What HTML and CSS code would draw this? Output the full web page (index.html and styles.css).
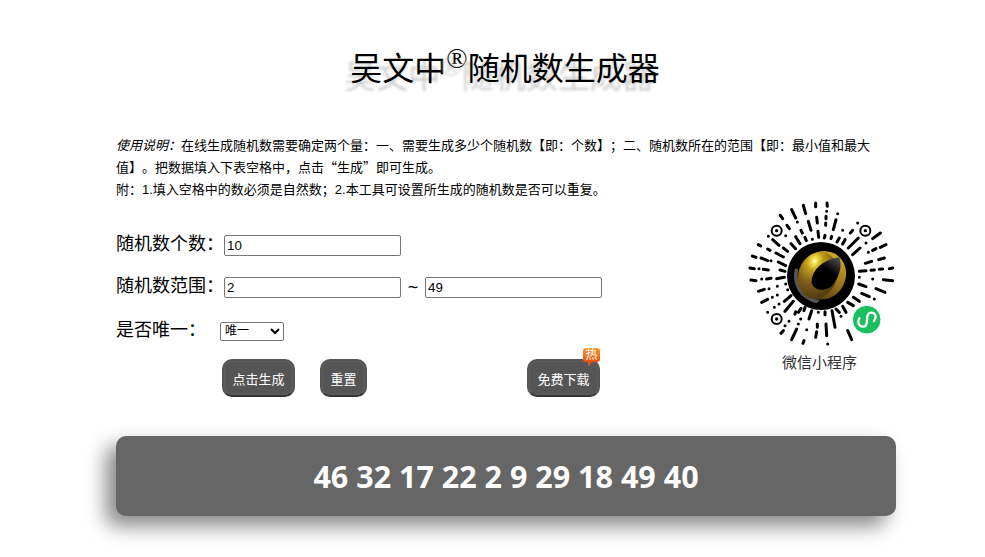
FILE: index.html
```html
<!DOCTYPE html>
<html lang="zh-CN">
<head>
<meta charset="utf-8">
<title>吴文中随机数生成器</title>
<link rel="stylesheet" href="styles.css">
</head>
<body>
<main class="page">
  <h1 class="title">吴文中<sup class="reg">®</sup>随机数生成器</h1>
  <div class="intro">
    <p><em>使用说明&#xFF1A;</em>在线生成随机数需要确定两个量&#xFF1A;一、需要生成多少个随机数【即&#xFF1A;个数】&#xFF1B;二、随机数所在的范围【即&#xFF1A;最小值和最大值】。把数据填入下表空格中&#xFF0C;点击<span class="quote">&#x201C;</span>生成<span class="quote">&#x201D;</span>即可生成。</p>
    <p>附&#xFF1A;1.填入空格中的数必须是自然数&#xFF1B;2.本工具可设置所生成的随机数是否可以重复。</p>
  </div>
  <div class="workspace">
    <form class="form">
      <div class="row">
        <label class="label">随机数个数&#xFF1A;</label>
        <input class="field" type="text" value="10">
      </div>
      <div class="row row-range">
        <label class="label">随机数范围&#xFF1A;</label>
        <input class="field" type="text" value="2">
        <span class="tilde">~</span>
        <input class="field" type="text" value="49">
      </div>
      <div class="row row-select">
        <label class="label label-select">是否唯一&#xFF1A;</label>
        <select class="select"><option>唯一</option><option>不唯一</option></select>
      </div>
      <div class="actions">
        <button class="btn" type="button">点击生成</button>
        <button class="btn" type="button">重置</button>
        <span class="spring"></span>
        <span class="btn-wrap">
          <button class="btn" type="button">免费下载</button>
          <span class="hot">热</span>
        </span>
      </div>
    </form>
    <aside class="qr">
      <svg class="qr-code" viewBox="0 0 456 456" aria-hidden="true">
        <defs>
          <radialGradient id="gold" cx="0.3" cy="0.24" r="0.95">
            <stop offset="0" stop-color="#fffbe0"/>
            <stop offset="0.07" stop-color="#f4e04a"/>
            <stop offset="0.22" stop-color="#bf9c1a"/>
            <stop offset="0.5" stop-color="#7d5c16"/>
            <stop offset="1" stop-color="#3f2e0e"/>
          </radialGradient>
          <linearGradient id="goldside" x1="0" y1="0" x2="0" y2="1">
            <stop offset="0" stop-color="#cfa926"/>
            <stop offset="0.55" stop-color="#94701a"/>
            <stop offset="1" stop-color="#4e3a12"/>
          </linearGradient>
          <linearGradient id="holefill" x1="0.8" y1="0" x2="0.2" y2="1">
            <stop offset="0" stop-color="#4a4a4a"/>
            <stop offset="0.25" stop-color="#1c1c1c"/>
            <stop offset="0.4" stop-color="#000"/>
          </linearGradient>
        </defs>
        <g class="dash">
          <path d="M212 15V26M175 22L182 47M140 35L152 60M106 52L113 62M126 82L133 92M157 72h.1M190 70L198 97M215 58L217 75M168 97L172 105M219 100L221 118M180 118L184 128M152 116L165 137M122 113h.1M202 124h.1M83 125L102 142M70 115h.1M138 137L152 152M115 150L128 160M40 140L47 144M68 153L75 157M93 165L115 177M22 174L33 178M48 180L68 188M78 188h.1M100 192L122 203M15 210L28 212M42 212h.1M55 214L70 216M105 216L120 220"/>
          <g class="q-tr">
            <path d="M18 15L19 25M17 40h.1M15 55V62M14 75V82M50 47h.1M45 65L37 95M65 97h.1M95 97L88 105M110 75h.1M12 112L10 120M32 115L30 122M55 120L48 132M72 125L65 138M112 120L82 150M117 150L95 170M135 135h.1M178 105L155 122M195 140L178 148M165 152L155 157M142 163h.1M190 180L173 185M152 190L133 196M215 210L205 212M185 213L175 214M160 216L150 217M135 218L115 220"/>
          </g>
          <g class="q-bl">
            <path d="M18 18L33 20M50 15h.1M65 15L78 13M95 14L118 10M40 52L58 46M72 44h.1M97 37h.1M122 30h.1M128 47h.1M50 85L68 76M82 70h.1M97 63h.1M118 82L138 65M68 115h.1M88 100h.1M102 90h.1M120 112L145 82M150 120L152 113M168 103L160 115M180 100L177 110M200 110L192 135M167 135h.1M220 115h.1M132 142h.1M120 155h.1M160 150h.1M108 178L115 170M155 165L140 197M185 167h.1M217 150V160M215 173L212 190M177 200L174 208"/>
          </g>
          <g class="q-br">
            <path d="M115 10h.1M155 15h.1M187 17L215 20M113 30L135 38M165 44L192 55M122 58L145 68M97 70L115 82M160 75h.1M80 85L97 95M65 97L75 115M45 105L55 115M12 113V122M33 110L42 160M60 127h.1M15 150L17 185M80 170L92 197M20 210h.1"/>
          </g>
        </g>
        <g class="rings">
          <circle cx="95" cy="98" r="15"/>
          <circle cx="361" cy="98" r="15"/>
          <circle cx="95" cy="363" r="15"/>
        </g>
        <g class="ring-dots">
          <circle cx="95" cy="98" r="5"/>
          <circle cx="361" cy="98" r="5"/>
          <circle cx="95" cy="363" r="5"/>
        </g>
        <circle class="logo-bg" cx="228" cy="234" r="102"/>
        <path class="logo-edge" d="M150 210A84 84 0 0 0 215 316L225 306A74 74 0 0 1 160 215Z"/>
        <ellipse cx="234" cy="232" rx="68" ry="74" transform="rotate(28 234 232)" fill="url(#goldside)"/>
        <ellipse cx="218" cy="232" rx="58" ry="72" transform="rotate(20 218 232)" fill="url(#gold)"/>
        <path class="logo-hole" fill="url(#holefill)" d="M282 178C240 184 200 212 200 254C206 280 250 284 267 256C284 232 293 202 282 178Z"/>
        <circle class="green" cx="365" cy="365" r="43"/>
        <path class="mini" d="M343 361C336 372 341 386 354 386C366 386 366 374 366 365C366 355 368 344 379 344C392 344 396 358 387 369"/>
      </svg>
      <div class="qr-name">微信小程序</div>
    </aside>
  </div>
  <div class="result">46 32 17 22 2 9 29 18 49 40</div>
</main>
</body>
</html>
```
FILE: styles.css
```css
* { box-sizing: border-box; }
html, body { margin: 0; background: #fff; }
body {
  font-family: "Liberation Sans", "Noto Sans CJK SC", sans-serif;
  color: #000;
  height: 557px;
  overflow: hidden;
  text-spacing-trim: space-all;
}
.page {
  width: 780px;
  margin-left: 116px;
  padding-top: 42px;
}
.title {
  margin: 0 2px 0 0;
  height: 54px;
  text-align: center;
  font-family: "Liberation Serif", "Noto Sans CJK SC", serif;
  font-size: 32px;
  font-weight: 400;
  line-height: 54px;
  text-shadow: -6px 8px 3px #ccc;
}
.reg {
  font-size: 28px;
  line-height: 0;
  vertical-align: 12px;
}
.intro {
  margin-top: 39px;
  width: 762px;
  font-size: 13px;
  line-height: 22px;
}
.intro p { margin: 0; }
.quote {
  font-family: "Noto Sans CJK SC", sans-serif;
  line-height: 0;
}
.workspace {
  display: flex;
  justify-content: space-between;
}
.form {
  width: 486px;
  padding-top: 34px;
}
.row {
  display: flex;
  align-items: center;
  height: 21px;
  margin-bottom: 21px;
}
.row-range { margin-bottom: 23px; }
.row-select {
  height: 20px;
  margin-bottom: 18px;
}
.label {
  width: 108px;
  flex: none;
  margin-top: -2px;
  font-size: 18px;
  line-height: 21px;
}
.label-select { width: 104px; }
.field {
  width: 177px;
  height: 21px;
  flex: none;
  padding: 1px 2px;
  border: 1px solid #767676;
  border-radius: 2px;
  background: #fff;
  font: 13.333px "Liberation Sans", sans-serif;
  color: #000;
}
.tilde {
  width: 24px;
  text-align: center;
  font-size: 18px;
}
.select {
  width: 64px;
  height: 19px;
  padding: 0;
  border: 1px solid #767676;
  border-radius: 2px;
  background: #fff;
  font: 12px "Liberation Sans", "Noto Sans CJK SC", sans-serif;
  color: #000;
}
.actions {
  display: flex;
  align-items: flex-start;
  gap: 25px;
  padding: 0 2px 0 106px;
}
.spring { flex: 1; }
.btn-wrap { position: relative; display: block; }
.btn {
  display: block;
  height: 38px;
  padding: 0 8.5px;
  border: 2px solid #555;
  border-bottom-color: #333;
  border-radius: 10px;
  background: #555;
  box-shadow: inset 0 0 2px #777;
  color: #fff;
  font: 13px "Liberation Sans", "Noto Sans CJK SC", sans-serif;
}
.hot {
  position: absolute;
  right: 0;
  top: -11px;
  width: 17px;
  height: 14px;
  border-radius: 3px;
  background: linear-gradient(#f79a3c, #e8500a);
  color: #fff;
  font-size: 12px;
  line-height: 14px;
  text-align: center;
}
.hot::after {
  content: "";
  position: absolute;
  left: 5px;
  top: 14px;
  border-style: solid;
  border-width: 5px 4px 0 0;
  border-color: #e8500a transparent transparent transparent;
}
.qr {
  width: 152px;
  margin-right: -1px;
  text-align: center;
}
.qr-code {
  display: block;
  width: 152px;
  height: 152px;
  margin-top: -3px;
}
.dash path {
  fill: none;
  stroke: #000;
  stroke-width: 9;
  stroke-linecap: round;
}
.q-tr { transform: translate(228px, 0); }
.q-bl { transform: translate(0, 228px); }
.q-br { transform: translate(228px, 228px); }
.rings circle { fill: none; stroke: #000; stroke-width: 6; }
.ring-dots circle { fill: #000; }
.logo-bg { fill: #000; }
.logo-edge { fill: #555; }
.green { fill: #1abf60; stroke: #fff; stroke-width: 3; }
.mini { fill: none; stroke: #fff; stroke-width: 7; stroke-linecap: round; }
.qr-name {
  margin: 2px 3px 0 0;
  font-size: 15px;
  line-height: 22px;
  color: #333;
}
.result {
  height: 80px;
  margin-top: 39px;
  border-radius: 10px;
  background: #666;
  box-shadow: -10px 10px 20px #888;
  color: #fff;
  font: 700 30.5px/80px "Open Sans", sans-serif;
  text-align: center;
}
```
